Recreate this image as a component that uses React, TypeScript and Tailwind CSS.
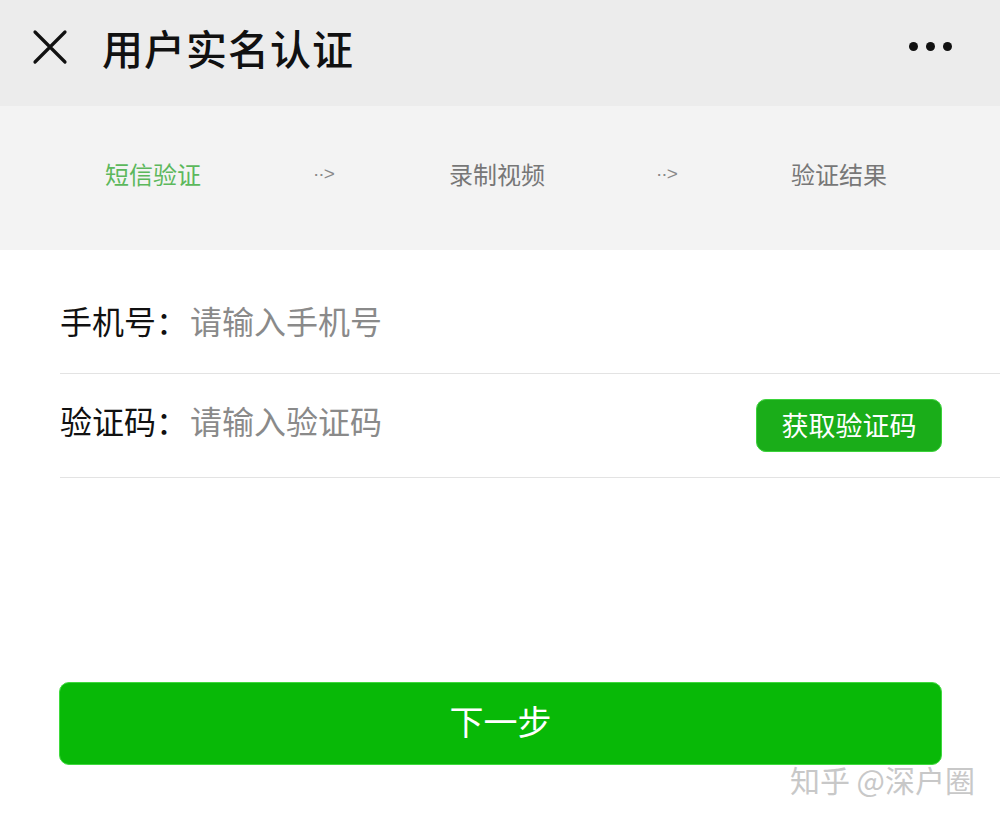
const font = "font-['Noto_Sans_CJK_SC','Noto_Sans',sans-serif]";

const Arrow = ({ className }: { className: string }) => (
  <span className={`w-[25px] shrink-0 font-['Liberation_Sans',sans-serif] text-[19px] text-[#888] tracking-[-1px] ${className}`}>··&gt;</span>
);

export default function App() {
  return (
    <main className={`${font} w-[1000px] h-[821px] bg-white overflow-hidden flex flex-col`}>
      <header className="h-[106px] bg-[#ececec] flex items-start pt-[29px] px-[32px]">
        <svg width="36" height="36" viewBox="0 0 36 36" className="shrink-0">
          <path d="M3 3 L33 33 M33 3 L3 33" stroke="#111" strokeWidth="3.2" strokeLinecap="round" />
        </svg>
        <h1 className="ml-[34px] mt-[-4px] text-[41px] leading-[44px] font-medium text-[#111] tracking-[1px]">用户实名认证</h1>
        <div className="ml-auto mr-[16px] mt-[13px] flex gap-[8px]">
          <span className="w-[9px] h-[9px] rounded-full bg-[#111]" />
          <span className="w-[9px] h-[9px] rounded-full bg-[#111]" />
          <span className="w-[9px] h-[9px] rounded-full bg-[#111]" />
        </div>
      </header>

      <section className="h-[144px] bg-[#f3f3f3] flex items-center pb-[8px] text-[24px]">
        <span className="ml-[105px] shrink-0 text-[#5cb85c]">短信验证</span>
        <Arrow className="ml-[112px]" />
        <span className="ml-[111px] shrink-0 text-[#777]">录制视频</span>
        <Arrow className="ml-[111px]" />
        <span className="ml-[110px] shrink-0 text-[#777]">验证结果</span>
      </section>

      <section className="pl-[60px] flex flex-col">
        <div className="h-[124px] flex items-center pt-[16px] border-b border-[#e3e3e3]">
          <span className="text-[32px] text-[#111]">手机号：</span>
          <span className="text-[32px] text-[#8a8a8a] ml-[2px]">请输入手机号</span>
        </div>
        <div className="h-[104px] flex items-center border-b border-[#e3e3e3] pr-[58px]">
          <span className="text-[32px] text-[#111] mb-[12px]">验证码：</span>
          <span className="text-[32px] text-[#8a8a8a] ml-[2px] mb-[12px]">请输入验证码</span>
          <button className="ml-auto w-[186px] h-[53px] rounded-[10px] bg-[#1aad19] border border-[#3bd33a] text-white text-[27px]">
            获取验证码
          </button>
        </div>
      </section>

      <div className="mt-[204px] px-[59px] pr-[58px]">
        <button className="w-full h-[83px] rounded-[10px] bg-[#08b907] border border-[#3fd93e] text-white text-[34px] pb-[6px]">
          下一步
        </button>
      </div>
      <div className="flex justify-end pr-[25px] mt-[-8px]">
        <span className="text-[30px] text-[#c8c8c8]">知乎 @深户圈</span>
      </div>
    </main>
  );
}
